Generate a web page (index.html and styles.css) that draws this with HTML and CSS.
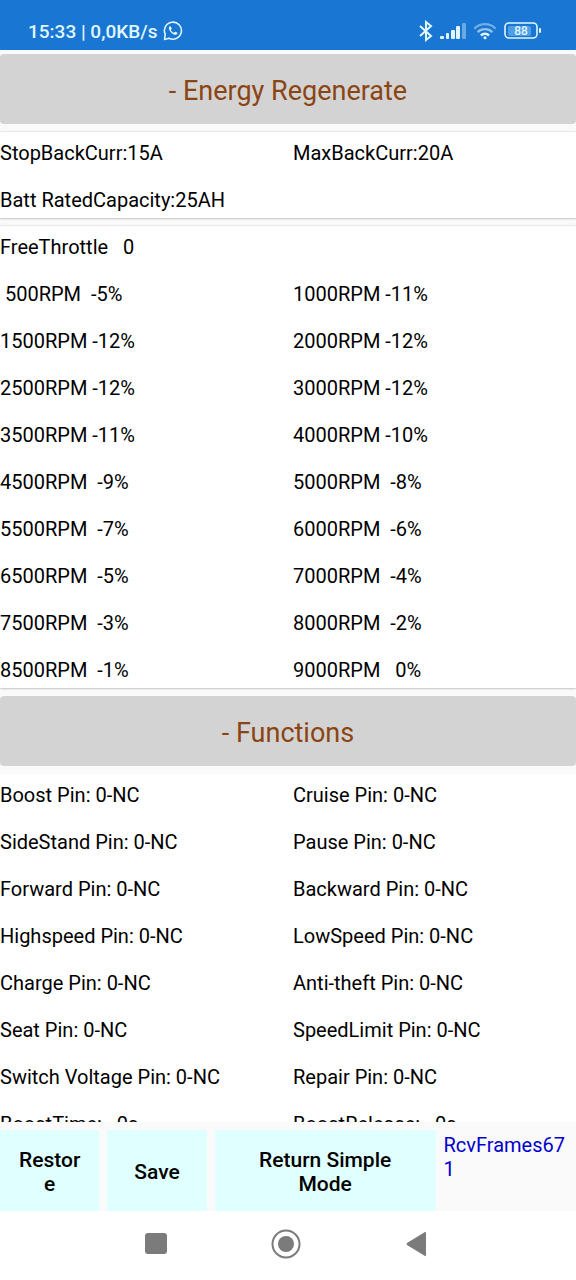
FILE: index.html
```html
<!DOCTYPE html>
<html lang="en">
<head>
    <meta charset="UTF-8">
    <meta name="viewport" content="width=device-width, initial-scale=1.0">
    <title>Controller Parameters</title>
    <link rel="stylesheet" href="styles.css">
</head>
<body>

    <!-- Status Bar -->
    <header class="status-bar">
        <div class="status-left">
            <span>15:33 | 0,0KB/s</span>
            <svg width="20" height="20" viewBox="0 0 20 20" fill="none" stroke="currentColor">
                <path d="M1.6 18.4l.6-5.2a8.5 8.5 0 1 1 3.8 4z" stroke-width="1.6" stroke-linejoin="round"/>
                <path d="M6.9 5.3c-1.8 1.2-1 3.8 1.2 6.1 2.3 2.3 4.9 3.2 6.2 1.3.3-.6.1-.9-.3-1.1l-1.5-.8c-.4-.2-.7-.1-.9.2l-.6.7c-1.3-.4-2.5-1.5-3.1-2.8l.6-.8c.2-.3.2-.5.1-.8l-.7-1.6c-.2-.4-.5-.6-1-.4z" fill="currentColor" stroke="none"/>
            </svg>
        </div>
        <div class="status-right">
            <svg width="14" height="22" viewBox="0 0 14 22" fill="none" stroke="currentColor" stroke-width="2">
                <path d="M1 6l11 10-5 4V2l5 4L1 16"/>
            </svg>
            <svg width="26" height="18" viewBox="0 0 26 18" fill="currentColor">
                <rect x="0" y="14" width="4" height="3" rx="1"/>
                <rect x="6" y="11" width="3" height="6" rx="1"/>
                <rect x="11" y="8" width="4" height="9" rx="1"/>
                <rect x="16" y="4" width="4" height="13" rx="1"/>
                <rect x="22" y="1" width="4" height="16" rx="1" opacity=".4"/>
            </svg>
            <svg width="24" height="20" viewBox="0 0 26 20" fill="none" stroke="currentColor" stroke-width="2.4">
                <path d="M1.5 7.5a16 16 0 0 1 23 0" opacity=".45"/>
                <path d="M5 11.3a11.5 11.5 0 0 1 16 0" opacity=".6"/>
                <path d="M8.6 14.8a6.6 6.6 0 0 1 8.8 0" stroke-width="2.8"/>
                <circle cx="13" cy="17.3" r="1.7" fill="currentColor" stroke="none"/>
            </svg>
            <svg class="battery" width="38" height="18" viewBox="0 0 38 18">
                <rect x="1" y="1" width="32" height="15" rx="4" fill="none" stroke="currentColor" stroke-width="1.6"/>
                <rect x="4" y="4" width="23" height="10" rx="2" fill="#4f9de4"/>
                <rect x="35" y="6" width="2" height="5" rx="1" fill="currentColor"/>
                <text x="17" y="13" text-anchor="middle" fill="currentColor">88</text>
            </svg>
        </div>
    </header>

    <!-- Parameter Sections -->
    <main class="content">
        <button type="button" class="section-title">- Energy Regenerate</button>

        <div class="card raised">
            <span>StopBackCurr:15A</span>
            <span>MaxBackCurr:20A</span>
            <span class="wide">Batt RatedCapacity:25AH</span>
        </div>

        <div class="card raised">
            <span class="wide">FreeThrottle   0</span>
            <span> 500RPM  -5%</span>
            <span>1000RPM -11%</span>
            <span>1500RPM -12%</span>
            <span>2000RPM -12%</span>
            <span>2500RPM -12%</span>
            <span>3000RPM -12%</span>
            <span>3500RPM -11%</span>
            <span>4000RPM -10%</span>
            <span>4500RPM  -9%</span>
            <span>5000RPM  -8%</span>
            <span>5500RPM  -7%</span>
            <span>6000RPM  -6%</span>
            <span>6500RPM  -5%</span>
            <span>7000RPM  -4%</span>
            <span>7500RPM  -3%</span>
            <span>8000RPM  -2%</span>
            <span>8500RPM  -1%</span>
            <span>9000RPM   0%</span>
        </div>

        <button type="button" class="section-title">- Functions</button>

        <div class="card">
            <span>Boost Pin: 0-NC</span>
            <span>Cruise Pin: 0-NC</span>
            <span>SideStand Pin: 0-NC</span>
            <span>Pause Pin: 0-NC</span>
            <span>Forward Pin: 0-NC</span>
            <span>Backward Pin: 0-NC</span>
            <span>Highspeed Pin: 0-NC</span>
            <span>LowSpeed Pin: 0-NC</span>
            <span>Charge Pin: 0-NC</span>
            <span>Anti-theft Pin: 0-NC</span>
            <span>Seat Pin: 0-NC</span>
            <span>SpeedLimit Pin: 0-NC</span>
            <span>Switch Voltage Pin: 0-NC</span>
            <span>Repair Pin: 0-NC</span>
            <span>BoostTime:   0s</span>
            <span>BoostRelease:   0s</span>
        </div>
    </main>

    <!-- Action Buttons -->
    <footer class="actions">
        <button type="button" class="action">Restore</button>
        <button type="button" class="action">Save</button>
        <button type="button" class="action">Return Simple Mode</button>
        <span class="frames">RcvFrames671</span>
    </footer>

    <!-- System Navigation -->
    <nav class="nav-bar">
        <button type="button" class="nav-button" aria-label="Recent apps">
            <svg width="30" height="30" viewBox="0 0 30 30"><rect x="4" y="4" width="22" height="21" rx="3" fill="#7b7b7b"/></svg>
        </button>
        <button type="button" class="nav-button" aria-label="Home">
            <svg width="30" height="30" viewBox="0 0 30 30">
                <circle cx="15" cy="15" r="13.5" fill="none" stroke="#7b7b7b" stroke-width="2"/>
                <circle cx="15" cy="15" r="8" fill="#7b7b7b"/>
            </svg>
        </button>
        <button type="button" class="nav-button" aria-label="Back">
            <svg width="30" height="30" viewBox="0 0 30 30"><path d="M25 4v22.5q0 1-1 .5L6 16q-1-1 0-2L24 3q1-.5 1 1z" fill="#7b7b7b"/></svg>
        </button>
    </nav>

</body>
</html>
```

FILE: styles.css
```css
/* Global Styles */
* {
    box-sizing: border-box;
}

body {
    font-family: Roboto, Arial, sans-serif;
    font-size: 20px;
    color: #000;
    background-color: #fafafa;
    margin: 0;
    display: flex;
    flex-direction: column;
    height: 100vh;
}

button {
    font-family: inherit;
    border: none;
    cursor: pointer;
}

svg {
    display: block;
}

/* Status Bar */
.status-bar {
    display: flex;
    justify-content: space-between;
    align-items: center;
    height: 50px;
    padding: 12px 34px 0 28px;
    background-color: #1976d2;
    color: #e0f7ff;
    font-size: 19px;
    font-weight: 500;
}

.status-left {
    display: flex;
    align-items: center;
    gap: 6px;
}

.status-right {
    display: flex;
    align-items: center;
    gap: 7px;
}

.battery {
    font-size: 12px;
}

/* Sections */
.content {
    flex: 1;
    min-height: 0;
    overflow: hidden;
    display: flex;
    flex-direction: column;
    gap: 8px;
    padding-top: 4px;
}

.section-title {
    flex-shrink: 0;
    height: 70px;
    padding-top: 4px;
    background-color: #d3d3d3;
    border-radius: 4px;
    color: #8b4513;
    font-size: 27px;
}

.card {
    flex-shrink: 0;
    display: grid;
    grid-template-columns: 1fr 1fr;
    gap: 11px 10px;
    padding-top: 3px;
    background-color: #fff;
    line-height: 36px;
    white-space: pre;
}

.raised {
    box-shadow: 0 0 2px rgba(0, 0, 0, 0.2), 0 1px 2px rgba(0, 0, 0, 0.15);
}

.wide {
    grid-column: 1 / -1;
}

/* Action Buttons */
.actions {
    display: grid;
    grid-template-columns: minmax(0, 9fr) minmax(0, 9fr) minmax(0, 20fr) minmax(0, 12fr);
    gap: 8px;
    padding-top: 8px;
    line-height: 24px;
}

.action {
    height: 81px;
    padding: 2px 18px 0;
    background-color: #e0ffff;
    color: #000;
    font-size: 21px;
    font-weight: 500;
    line-height: 24px;
    overflow-wrap: anywhere;
}

.frames {
    padding-top: 3px;
    color: #0000cd;
    overflow-wrap: anywhere;
}

/* System Navigation */
.nav-bar {
    display: flex;
    justify-content: center;
    align-items: center;
    gap: 100px;
    height: 69px;
    padding: 0 4px 4px 0;
    background-color: #fff;
}

.nav-button {
    padding: 0;
    background: none;
}
```
